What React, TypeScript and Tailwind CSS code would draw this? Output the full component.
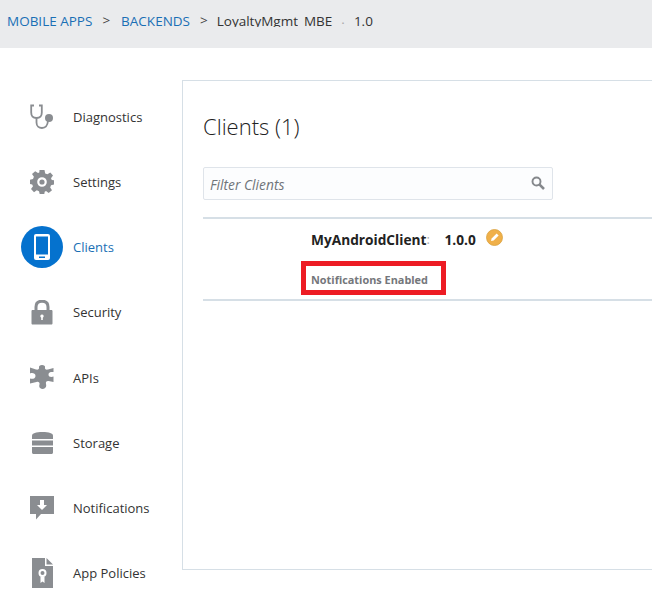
import type { ReactNode } from 'react';

const GRAY = '#8a8d91';

function Stethoscope() {
  return (
    <svg width="26" height="26" viewBox="0 0 26 26" fill="none">
      <path d="M5 1.5H2.2V8.5C2.2 12 4.5 14 7.5 14C10.5 14 12.8 12 12.8 8.5V1.5H10" stroke={GRAY} strokeWidth="1.8" />
      <path d="M7.5 14V18.5C7.5 22 10 24 13 24C16.5 24 18.5 21.5 19 17" stroke={GRAY} strokeWidth="1.8" />
      <circle cx="20" cy="14" r="4" fill={GRAY} />
    </svg>
  );
}

function Gear() {
  return (
    <svg width="24" height="24" viewBox="0 0 24 24" fill={GRAY}>
      <path
        fillRule="evenodd"
        d="M9.5 0H14.5L15.2 3.4L17.4 4.3L20.3 2.4L23 5.6L21 8.3L21.8 10L24 10.3V14.5L21 15.2L20.2 17.4L22 20.3L18.7 23L16 21L14.7 21.7L14.3 24H9.7L9 21.2L6.8 20.3L4 22.2L1 19L3 16.2L2.2 14.5L0 14V9.8L3 9L3.9 6.8L2 4L5.2 1.2L8 3L9.3 2.4ZM12 7.2A4.8 4.8 0 1 0 12 16.8A4.8 4.8 0 1 0 12 7.2Z"
      />
      <circle cx="12" cy="12" r="2.6" />
    </svg>
  );
}

function Phone() {
  return (
    <svg width="16" height="26" viewBox="0 0 16 26">
      <rect x="0" y="0" width="16" height="26" rx="2" fill="#fff" />
      <rect x="2" y="2.5" width="12" height="18" fill="#0572ce" />
      <rect x="5" y="22.5" width="6" height="1.5" fill="#0572ce" />
    </svg>
  );
}

function Lock() {
  return (
    <svg width="22" height="25" viewBox="0 0 22 25" fill={GRAY}>
      <path d="M5 10V7C5 3 7.5 1.2 11 1.2C14.5 1.2 17 3 17 7V10" fill="none" stroke={GRAY} strokeWidth="3" />
      <path fillRule="evenodd" d="M1.5 10H20.5C21 10 21.5 10.5 21.5 11V23.5C21.5 24 21 24.5 20.5 24.5H1.5C1 24.5 0.5 24 0.5 23.5V11C0.5 10.5 1 10 1.5 10ZM11 14.5A1.7 1.7 0 0 0 10.2 17.7V20H11.8V17.7A1.7 1.7 0 0 0 11 14.5Z" />
    </svg>
  );
}

function Puzzle() {
  return (
    <svg width="24" height="24" viewBox="0 0 24 24" fill={GRAY}>
      <path d="M0 2.5L6 4.5C8 5 9.5 4 9 2.5C8.7 1 10 0 12 0C14 0 15.5 1 15 2.5C14.5 4 16 5 18 4.5L23.5 3V7C22 7 18.5 6.5 18.5 9.5C18.5 12.5 22 12 23.5 11.5V17L18.5 16C16.5 15.8 15.5 17 16 19C16.5 20.5 16.5 23.5 12.5 24C9 23.5 9 21 9.5 19.5C10 17.5 8.5 16.5 6.5 17L0 18.5V13.5C2 14.2 5.5 14 5.5 11C5.5 8 2 7.5 0 8.5Z" />
    </svg>
  );
}

function Storage() {
  return (
    <svg width="21" height="22" viewBox="0 0 21 22" fill={GRAY}>
      <path d="M0 7V3.5C0 1.2 4 0 10.5 0C17 0 21 1.2 21 3.5V7Z" />
      <rect x="0" y="8.5" width="21" height="5" />
      <path d="M0 15H21V20.5C21 21.3 20.3 22 19.5 22H1.5C0.7 22 0 21.3 0 20.5Z" />
    </svg>
  );
}

function NotificationIcon() {
  return (
    <svg width="24" height="24" viewBox="0 0 24 24">
      <path d="M0 0H24V18H11L6 23.5V18H0Z" fill={GRAY} />
      <path d="M10 4H14V9H17L12 14L7 9H10Z" fill="#fff" />
    </svg>
  );
}

function PolicyIcon() {
  return (
    <svg width="21" height="30" viewBox="0 0 21 30">
      <path d="M0 0H13V8H21V30H0Z" fill={GRAY} />
      <path d="M14.5 0L21 6.5H14.5Z" fill={GRAY} />
      <circle cx="10.5" cy="15" r="3" fill="none" stroke="#fff" strokeWidth="2" />
      <path d="M8.5 18.5V25L10.5 23.5L12.5 25V18.5Z" fill="#fff" />
    </svg>
  );
}

function PencilBadge() {
  return (
    <svg width="17" height="17" viewBox="0 0 17 17">
      <circle cx="8.5" cy="8.5" r="8" fill="#f0b049" stroke="#d9a13f" strokeWidth="0.8" />
      <path d="M5 12L5.6 9.4L10.6 4.4L12.6 6.4L7.6 11.4Z" fill="#fff" />
    </svg>
  );
}

function SearchIcon() {
  return (
    <svg width="14" height="14" viewBox="0 0 14 14" fill="none" stroke="#85888c">
      <circle cx="5.5" cy="5.5" r="4" strokeWidth="1.9" />
      <path d="M8.6 8.6L13 13" strokeWidth="2.6" />
    </svg>
  );
}

const navItems: { label: string; icon: ReactNode; active?: boolean }[] = [
  { label: 'Diagnostics', icon: <Stethoscope /> },
  { label: 'Settings', icon: <Gear /> },
  { label: 'Clients', icon: <Phone />, active: true },
  { label: 'Security', icon: <Lock /> },
  { label: 'APIs', icon: <Puzzle /> },
  { label: 'Storage', icon: <Storage /> },
  { label: 'Notifications', icon: <NotificationIcon /> },
  { label: 'App Policies', icon: <PolicyIcon /> },
];

export default function App() {
  return (
    <div className="w-[652px] h-[590px] overflow-hidden bg-white font-['Open_Sans',sans-serif] text-[#333]">
      {/* Breadcrumb */}
      <div className="h-12 bg-[#eaebed] flex items-start pl-[7px] pt-[12px] text-[13.5px] leading-[18px]">
        <span className="text-[#1a6fb5]">MOBILE APPS</span>
        <span className="ml-[10px] -mt-[1px] text-[#444]">&gt;</span>
        <span className="ml-[11px] text-[#1a6fb5]">BACKENDS</span>
        <span className="ml-[10px] -mt-[1px] text-[#444]">&gt;</span>
        <span className="ml-[9px] h-[15px] overflow-hidden text-[#333]">LoyaltyMgmt</span>
        <span className="ml-[6px] text-[#333]">MBE</span>
        <span className="ml-[9px] mt-[2px] text-[#aaa]">·</span>
        <span className="ml-[9px] text-[#333]">1.0</span>
      </div>

      <div className="flex pt-8">
        {/* Sidebar */}
        <nav className="w-[182px] shrink-0 pt-[4px]">
          {navItems.map((item) => (
            <div key={item.label} className="h-[65.2px] flex items-center">
              <div className="w-[73px] flex justify-center pl-[11px]">
                {item.active ? (
                  <div className="w-[42px] h-[42px] rounded-full bg-[#0572ce] flex items-center justify-center shrink-0">
                    {item.icon}
                  </div>
                ) : (
                  item.icon
                )}
              </div>
              <span className={`text-[13px] pt-[2px] ${item.active ? 'text-[#1a6fb5]' : 'text-[#333]'}`}>{item.label}</span>
            </div>
          ))}
        </nav>

        {/* Panel */}
        <main className="flex-1 h-[490px] border border-r-0 border-[#d6dfe6] pl-5 pt-[29px]">
          <h1 className="text-[22px] leading-[32px] font-light text-[#222]">Clients (1)</h1>
          <div className="mt-[25px] w-[350px] h-[33px] border border-[#dfe4ea] rounded-[2px] bg-[#fcfdfe] flex items-center justify-between pl-[6px] pr-[7px]">
            <span className="italic text-[13.8px] pt-[3px] text-[#70757a]">Filter Clients</span>
            <span className="-mt-[2px]">
              <SearchIcon />
            </span>
          </div>
          <div className="mt-[17px] border-y-2 border-[#d6dfe6] h-[84px] pl-[108px]">
            <div className="flex items-center pt-[9px]">
              <span className="font-bold text-[13.7px] leading-[24px] text-[#222]">MyAndroidClient</span>
              <span className="w-[18px] text-[13px] text-[#aaa]">:</span>
              <span className="font-bold text-[13.7px] leading-[24px] text-[#222]">1.0.0</span>
              <span className="ml-[10px] -mt-[5px]">
                <PencilBadge />
              </span>
            </div>
            {/* Red annotation round the label */}
            <div className="mt-[9px] -ml-[10px] w-[145px] h-[34px] border-[5px] border-[#ed1c24] flex items-center pl-[5px]">
              <span className="font-bold text-[10.9px] pt-[5px] text-[#74777b] whitespace-nowrap">Notifications Enabled</span>
            </div>
          </div>
        </main>
      </div>
    </div>
  );
}
